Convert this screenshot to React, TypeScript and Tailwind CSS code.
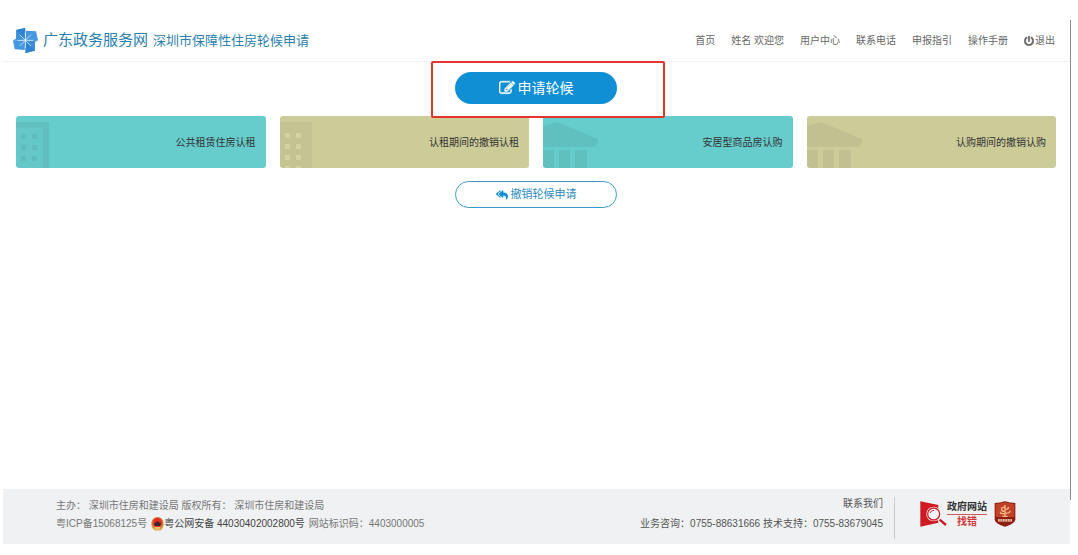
import React from "react";
import { FaPowerOff, FaReplyAll } from "react-icons/fa";

const navLinks = ["用户中心", "联系电话", "申报指引", "操作手册"];

const cards = [
  { title: "公共租赁住房认租", color: "bg-[#66cccc]", icon: "tower" },
  { title: "认租期间的撤销认租", color: "bg-[#cccc99]", icon: "block" },
  { title: "安居型商品房认购", color: "bg-[#66cccc]", icon: "bank" },
  { title: "认购期间的撤销认购", color: "bg-[#cccc99]", icon: "bank" },
];

const Logo = () => (
  <svg width="25" height="27" viewBox="0 0 75 79" className="shrink-0">
    <path d="M10 7L37 1V39L10 35Z" fill="#2f84d2" />
    <path d="M69 12L75 39H37L39 10Z" fill="#4597e0" />
    <path d="M66 70L37 78V39L66 43Z" fill="#2f84d2" />
    <path d="M5 66L0 39H37L35 68Z" fill="#4597e0" />
    <path d="M10 7L37 39H0L10 34Z" fill="#3b8eda" />
    <path d="M66 70L37 39H75L66 44Z" fill="#3b8eda" />
    <path
      d="M20 22L54 56M54 22L20 56M37 16V62M14 39H60"
      stroke="#fff"
      strokeOpacity="0.65"
      strokeWidth="3"
    />
  </svg>
);

const EditIcon = () => (
  <svg
    width="16"
    height="16"
    viewBox="0 0 1792 1792"
    fill="currentColor"
    stroke="currentColor"
    strokeWidth="50"
  >
    <path d="M888 1184l116-116-152-152-116 116v56h96v96h56zm440-720q-16-16-33 1l-350 350q-17 17-1 33t33-1l350-350q17-17 1-33zm80 594v190q0 119-84.5 203.5t-203.5 84.5h-832q-119 0-203.5-84.5t-84.5-203.5v-832q0-119 84.5-203.5t203.5-84.5h832q63 0 117 25 15 7 18 23 3 17-9 29l-49 49q-14 14-32 8-23-6-45-6h-832q-66 0-113 47t-47 113v832q0 66 47 113t113 47h832q66 0 113-47t47-113v-126q0-13 9-22l64-64q15-15 35-7t20 29zm-96-738l288 288-672 672h-288v-288zm444 132l-92 92-288-288 92-92q28-28 68-28t68 28l152 152q28 28 28 68t-28 68z" />
  </svg>
);

const CardIcon = ({ name }: { name: string }) => {
  if (name === "bank") {
    return (
      <svg width="56" height="46" viewBox="0 0 56 46" fill="#000" fillOpacity="0.06">
        <path d="M0 4L14 0L55 17V21L51 25H0ZM0 28H11V46H0ZM16 28H27V46H16ZM32 28H44V46H32Z" />
      </svg>
    );
  }
  if (name === "tower") {
    return (
      <svg width="33" height="46" viewBox="0 0 33 46" fill="#000" fillOpacity="0.06">
        <path d="M0 0H33V46H27V6H0Z" />
        <path d="M5 12h5v5h-5zM16 12h5v5h-5zM5 23h5v5h-5zM16 23h5v5h-5zM5 34h5v5h-5zM16 34h5v5h-5z" />
        <path d="M0 6H27V46H0Z" fillOpacity="0.02" />
      </svg>
    );
  }
  return (
    <svg width="32" height="46" viewBox="0 0 32 46">
      <path d="M0 0H32V46H0Z" fill="#000" fillOpacity="0.04" />
      <path
        d="M5 11h5v5h-5zM16 11h5v5h-5zM5 22h5v5h-5zM16 22h5v5h-5zM5 33h5v5h-5zM16 33h5v5h-5zM5 44h5v2h-5zM16 44h5v2h-5z"
        fill="#d2d2a2"
      />
    </svg>
  );
};

const PoliceBadge = () => (
  <svg width="13" height="14" viewBox="0 0 26 28" className="shrink-0">
    <path d="M1 13Q0 23 8 27H19Q26 23 25 13Z" fill="#e0ab57" />
    <circle cx="13" cy="12" r="12" fill="#d9743a" />
    <circle cx="13" cy="11" r="9" fill="#e0301e" />
    <path d="M6 14Q8 10 10 11L13 8L16 11Q19 10 20 14L18 18H8Z" fill="#3d2430" />
    <path d="M7 20H19L17 24H9Z" fill="#f0c46a" />
  </svg>
);

const FindErrorIcon = () => (
  <svg width="27" height="26" viewBox="0 0 81 78" className="shrink-0">
    <path d="M1 1L55 12V65L1 77Z" fill="#cf1a22" />
    <circle cx="41" cy="39" r="22" fill="#fff" />
    <circle cx="41" cy="39" r="18" fill="#fff" stroke="#cf1a22" strokeWidth="4" />
    <path d="M30 36Q33 28 42 28" stroke="#cf1a22" strokeWidth="3" fill="none" />
    <path d="M57 54L80 73" stroke="#eff1f3" strokeWidth="13" />
    <path d="M59 56L78 72" stroke="#cf1a22" strokeWidth="7" />
  </svg>
);

const ShieldIcon = () => (
  <svg width="22" height="26" viewBox="0 0 66 78" className="shrink-0">
    <path d="M2 6Q18 6 33 1Q48 6 64 6V56Q62 68 33 77Q4 68 2 56Z" fill="#8e1d12" />
    <path d="M5 9Q20 8 33 4Q46 8 61 9V48H5Z" fill="#c04229" />
    <path
      d="M33 12V46M33 20Q22 17 23 25T33 30M33 24Q44 26 43 18M33 37Q18 40 19 32M33 36Q48 38 48 29M25 46H41"
      stroke="#f1b98c"
      strokeWidth="4"
      fill="none"
    />
    <path d="M12 54h42v8H12z" fill="#ecc3a4" />
    <path d="M18 54v8M25 54v8M33 54v8M41 54v8M48 54v8" stroke="#8e1d12" strokeWidth="2" />
  </svg>
);

const Header = () => {
  return (
    <header className="flex items-center justify-between h-[42px] pl-[10px] pr-[15px] border-b border-[#f1f1f1]">
      <a href="#" className="flex items-center gap-[5px] text-[#2a81ad] whitespace-nowrap">
        <Logo />
        <span className="text-[15px]">广东政务服务网</span>
        <span className="text-[13px]">深圳市保障性住房轮候申请</span>
      </a>
      <nav className="flex items-center gap-4 text-[10px] text-[#666] whitespace-nowrap">
        <a href="#">首页</a>
        <span>姓名 欢迎您</span>
        {navLinks.map((link) => (
          <a href="#" key={link}>
            {link}
          </a>
        ))}
        <a href="#" className="flex items-center gap-px">
          <FaPowerOff size={10} stroke="currentColor" strokeWidth={20} />
          退出
        </a>
      </nav>
    </header>
  );
};

const Footer = () => {
  return (
    <footer className="flex justify-between h-[55px] bg-[#eff1f3] text-[10px] text-[#777] whitespace-nowrap">
      <div className="pl-[53px] pt-2 leading-[18px]">
        <p>主办： 深圳市住房和建设局 版权所有： 深圳市住房和建设局</p>
        <p className="flex items-center">
          <span>粤ICP备15068125号</span>
          <a href="#" className="flex items-center mx-1 text-[#444]">
            <PoliceBadge />
            粤公网安备 44030402002800号
          </a>
          <span>网站标识码：4403000005</span>
        </p>
      </div>
      <div className="flex">
        <div className="pt-[5px] pr-[11px] leading-5 text-right text-[#555]">
          <p>联系我们</p>
          <p>业务咨询：0755-88631666 技术支持：0755-83679045</p>
        </div>
        <div className="flex items-start w-[176px] h-[42px] mt-2 pt-1 pl-[25px] border-l border-[#ccc]">
          <a href="#" className="flex">
            <FindErrorIcon />
            <span className="flex flex-col items-center font-bold leading-3 text-[#333]">
              <span className="border-b border-[#cf5a5a] pb-px">政府网站</span>
              <span className="pt-px text-[#cf3a3a]">找错</span>
            </span>
          </a>
          <a href="#" aria-label="党政机关" className="ml-[7px]">
            <ShieldIcon />
          </a>
        </div>
      </div>
    </footer>
  );
};

const App = () => {
  return (
    <div className="flex min-h-screen bg-white pt-5 pb-[11px] pl-[3px] pr-2 font-['Liberation_Sans','Noto_Sans_CJK_SC',sans-serif]">
      <div className="relative flex flex-col flex-1">
        <Header />
        <main className="flex flex-col items-center flex-1 pt-[10px] pl-[13px] pr-[14px]">
          <div className="relative">
            <button className="flex items-center justify-center gap-[3px] w-[162px] h-8 rounded-full bg-[#118fd4] text-white text-[14px]">
              <EditIcon />
              申请轮候
            </button>
            <div className="absolute -left-6 -right-12 -top-[11px] -bottom-[14px] border-2 border-[#e5352b] rounded-xs pointer-events-none" />
          </div>
          <div className="grid grid-cols-4 gap-[14px] w-full mt-3">
            {cards.map((card) => (
              <a
                href="#"
                key={card.title}
                className={`flex items-center justify-between h-[52px] pr-[10px] rounded-[3px] overflow-hidden text-[10px] text-[#333] whitespace-nowrap ${card.color}`}
              >
                <span className="self-end">
                  <CardIcon name={card.icon} />
                </span>
                {card.title}
              </a>
            ))}
          </div>
          <button className="flex items-center justify-center gap-[3px] w-[162px] h-[27px] mt-[13px] rounded-full border border-[#3a9bcb] bg-white text-[#2a8bbd] text-[11px]">
            <FaReplyAll size={12} className="text-[#118fd4]" />
            撤销轮候申请
          </button>
        </main>
        <Footer />
        <div className="absolute top-0 -right-px bottom-11 w-px bg-[#8a8a8a]" />
      </div>
    </div>
  );
};

export default App;
